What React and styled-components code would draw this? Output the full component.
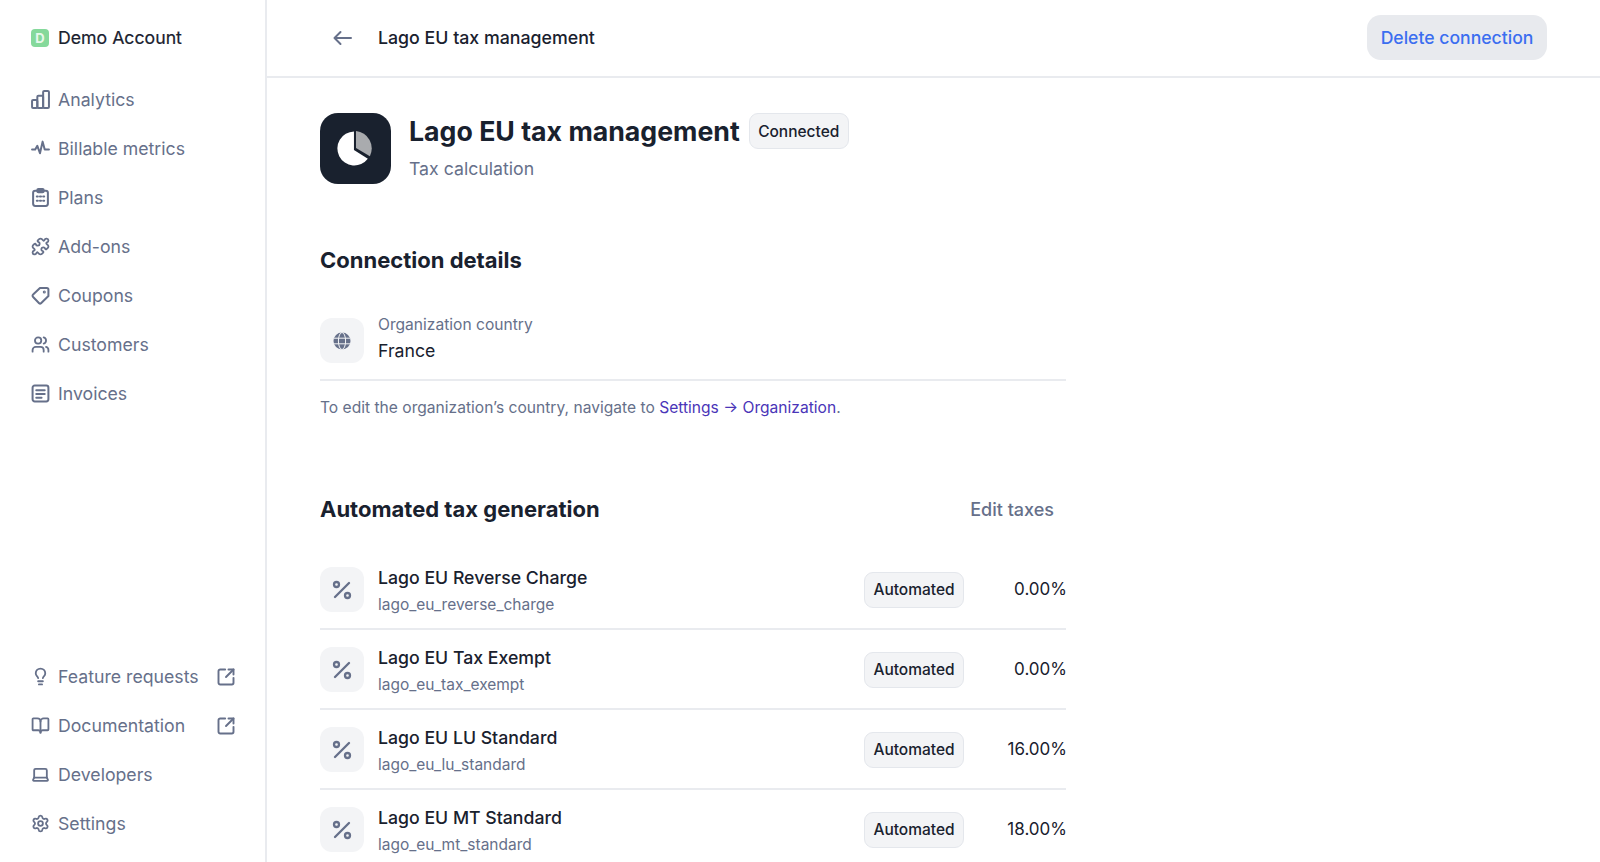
import React from "react";
import styled, { createGlobalStyle } from "styled-components";
import {
  Puzzle,
  Users,
  Lightbulb,
  BookOpen,
  Laptop,
  Settings,
  SquareArrowOutUpRight,
  Percent,
} from "lucide-react";

const Global = createGlobalStyle`
  html, body { margin: 0; padding: 0; background: #fff; }
  body { font-family: Inter, "Liberation Sans", sans-serif; color: #19212e; }
  * { box-sizing: border-box; }
`;

const Page = styled.div`
  display: flex;
  width: 1600px;
  height: 862px;
  overflow: hidden;
`;

const Sidebar = styled.aside`
  width: 267px;
  flex: none;
  display: flex;
  flex-direction: column;
  justify-content: space-between;
  border-right: 2px solid #e9ebef;
  padding: 0 0 14px 31px;
`;

const Account = styled.div`
  display: flex;
  align-items: center;
  gap: 9px;
  height: 75px;
  font-size: 17.7px;
  font-weight: 400;
  -webkit-text-stroke: 0.2px #19212e;
`;

const Avatar = styled.span`
  width: 18px;
  height: 18px;
  border-radius: 4px;
  background: #85d99b;
  color: #e8f8ec;
  font-size: 13px;
  font-weight: 700;
  display: flex;
  align-items: center;
  justify-content: center;
  -webkit-text-stroke: 0;
`;

const NavRow = styled.div`
  display: flex;
  align-items: center;
  gap: 8px;
  height: 49px;
  width: 205px;
  font-size: 17.7px;
  color: #66708a;
  svg { flex: none; }
`;

const ExtIcon = styled.span`
  margin-left: auto;
  display: flex;
`;

const Main = styled.main`
  flex: 1;
  display: flex;
  flex-direction: column;
`;

const Topbar = styled.header`
  height: 78px;
  flex: none;
  display: flex;
  align-items: center;
  border-bottom: 2px solid #e9ebef;
  padding: 0 53px 1px 66px;
  color: #66708a;
`;

const TopTitle = styled.div`
  margin-left: 26px;
  font-size: 17.75px;
  font-weight: 500;
  color: #19212e;
`;

const DangerButton = styled.button`
  margin-left: auto;
  width: 180px;
  height: 45px;
  border: 0;
  border-radius: 14px;
  background: #e8eaee;
  color: #3b6ef0;
  font-family: inherit;
  font-size: 17.6px;
  font-weight: 500;
`;

const Content = styled.div`
  width: 799px;
  padding: 35px 0 0 53px;
`;

const Hero = styled.div`
  display: flex;
  gap: 18px;
  margin-bottom: 60px;
`;

const HeroIcon = styled.div`
  width: 71px;
  height: 71px;
  border-radius: 18px;
  background: #19212e;
  display: flex;
  align-items: center;
  justify-content: center;
`;

const HeroTitleRow = styled.div`
  display: flex;
  align-items: center;
  gap: 9px;
  height: 36px;
  margin-bottom: 8px;
`;

const HeroTitle = styled.h1`
  margin: 0;
  font-size: 26.7px;
  font-weight: 700;
  line-height: 36px;
`;

const HeroSub = styled.div`
  font-size: 17.7px;
  line-height: 24px;
  color: #66708a;
`;

const Badge = styled.span`
  display: inline-flex;
  align-items: center;
  justify-content: center;
  height: 36px;
  width: 100px;
  border: 1px solid #e4e7ec;
  border-radius: 9px;
  background: #f3f4f6;
  font-size: 15.5px;
  font-weight: 500;
  color: #19212e;
  flex: none;
  margin-top: ${(p) => p.$top || 0}px;
`;

const SectionHead = styled.div`
  display: flex;
  align-items: center;
  justify-content: space-between;
  height: 32px;
`;

const SectionTitle = styled.h2`
  margin: 0;
  font-size: 22px;
  font-weight: 700;
  line-height: 32px;
`;

const EditLink = styled.span`
  font-size: 18px;
  font-weight: 500;
  color: #66708a;
  margin-right: 12px;
`;

const IconBox = styled.div`
  width: 44px;
  height: 45px;
  border-radius: 12px;
  background: #f3f4f6;
  color: #66708a;
  display: flex;
  align-items: center;
  justify-content: center;
  flex: none;
  margin-top: ${(p) => p.$top || 0}px;
`;

const OrgRow = styled.div`
  display: flex;
  align-items: flex-start;
  gap: 14px;
  height: 79px;
  margin-top: 26px;
  border-bottom: 2px solid #e9ebef;
  padding-top: 12px;
`;

const Label = styled.div`
  font-size: 15.6px;
  line-height: 22px;
  color: #66708a;
  margin-bottom: 3px;
`;

const Value = styled.div`
  font-size: 17.7px;
  line-height: 24px;
`;

const Helper = styled.p`
  margin: 15px 0 73px;
  font-size: 15.6px;
  line-height: 24px;
  color: #66708a;
  a { color: #4a35b8; text-decoration: none; }
`;

const TaxList = styled.div`
  margin-top: 25px;
`;

const TaxRow = styled.div`
  display: flex;
  align-items: center;
  height: 80px;
  padding-bottom: 1px;
  border-bottom: 2px solid #e9ebef;
`;

const TaxText = styled.div`
  flex: 1;
  margin: 4px 0 0 14px;
`;

const TaxName = styled.div`
  font-size: 17.7px;
  font-weight: 500;
  line-height: 24px;
  margin-bottom: 4px;
`;

const TaxCode = styled.div`
  font-size: 15.5px;
  line-height: 22px;
  color: #66708a;
`;

const Rate = styled.div`
  width: 103px;
  margin-right: -1px;
  text-align: right;
  font-size: 17px;
`;

const Glyph = styled.svg.attrs({
  width: 19,
  height: 19,
  viewBox: "0 0 18 18",
  fill: "none",
  stroke: "currentColor",
  strokeWidth: 1.9,
  strokeLinecap: "round",
  strokeLinejoin: "round",
})``;

function BarsIcon() {
  return (
    <Glyph>
      <rect x="1" y="9.5" width="5" height="7.5" rx="1" />
      <rect x="6" y="5.5" width="5.5" height="11.5" rx="1" />
      <rect x="11.5" y="1" width="5.5" height="16" rx="1" />
    </Glyph>
  );
}

function PulseIcon() {
  return (
    <Glyph>
      <path d="M1 10h3l2-3.5 2.5 7 2.5-11 2 7.5h4" />
    </Glyph>
  );
}

function PlansIcon() {
  return (
    <Glyph>
      <rect x="2" y="2.5" width="14" height="14.5" rx="2" />
      <rect x="6" y="1" width="6" height="3" rx="1" fill="currentColor" />
      <path d="M5.5 8h1M8.5 8h1M11.5 8h1M5.5 12h1M8.5 12h1M11.5 12h1" />
    </Glyph>
  );
}

function TagIcon() {
  return (
    <Glyph>
      <path d="M2 8 8.5 1.8H15A1.5 1.5 0 0 1 16.5 3.3V9.5L9.5 16.3A1.3 1.3 0 0 1 7.7 16.3L2 10.4A1.6 1.6 0 0 1 2 8Z" />
      <circle cx="12.6" cy="5.6" r="0.5" fill="currentColor" />
    </Glyph>
  );
}

function InvoiceIcon() {
  return (
    <Glyph>
      <rect x="1.5" y="1.5" width="15" height="15" rx="2" />
      <path d="M5 6h8M5 9.5h8M5 13h5" />
    </Glyph>
  );
}

function BackIcon() {
  return (
    <svg width="19" height="16" viewBox="0 0 19 16" fill="none" stroke="currentColor" strokeWidth="2" strokeLinecap="round" strokeLinejoin="round">
      <path d="M18 8H1.5M7.5 2 1.5 8l6 6" />
    </svg>
  );
}

function GlobeIcon() {
  return (
    <svg width="18" height="18" viewBox="0 0 18 18" fill="currentColor">
      <circle cx="9" cy="9" r="8.5" />
      <g fill="none" stroke="#f3f4f6" strokeWidth="1">
        <ellipse cx="9" cy="9" rx="3.6" ry="8.5" />
        <path d="M1 6.2h16M1 11.8h16" />
      </g>
    </svg>
  );
}

function PieIcon() {
  return (
    <svg width="37" height="37" viewBox="0 0 36 36">
      <path d="M16.5 1.5V19.5L30 28A16.5 16.5 0 1 1 16.5 1.5Z" fill="#fff" />
      <path d="M18.5 1A17 17 0 0 1 32 25.5L18.5 17.5Z" fill="#a9abae" />
    </svg>
  );
}

const lucideProps = { size: 19, strokeWidth: 2.3 };

const topNav = [
  ["Analytics", <BarsIcon />],
  ["Billable metrics", <PulseIcon />],
  ["Plans", <PlansIcon />],
  ["Add-ons", <Puzzle {...lucideProps} />],
  ["Coupons", <TagIcon />],
  ["Customers", <Users {...lucideProps} />],
  ["Invoices", <InvoiceIcon />],
];

const bottomNav = [
  ["Feature requests", <Lightbulb {...lucideProps} />, true],
  ["Documentation", <BookOpen {...lucideProps} />, true],
  ["Developers", <Laptop {...lucideProps} />],
  ["Settings", <Settings {...lucideProps} />],
];

const taxes = [
  ["Lago EU Reverse Charge", "lago_eu_reverse_charge", "0.00%"],
  ["Lago EU Tax Exempt", "lago_eu_tax_exempt", "0.00%"],
  ["Lago EU LU Standard", "lago_eu_lu_standard", "16.00%"],
  ["Lago EU MT Standard", "lago_eu_mt_standard", "18.00%"],
];

export default function App() {
  return (
    <Page>
      <Global />
      <Sidebar>
        <div>
          <Account>
            <Avatar>D</Avatar>
            Demo Account
          </Account>
          {topNav.map(([label, icon]) => (
            <NavRow key={label}>
              {icon}
              {label}
            </NavRow>
          ))}
        </div>
        <div>
          {bottomNav.map(([label, icon, external]) => (
            <NavRow key={label}>
              {icon}
              {label}
              {external && (
                <ExtIcon>
                  <SquareArrowOutUpRight size={20} strokeWidth={2.3} />
                </ExtIcon>
              )}
            </NavRow>
          ))}
        </div>
      </Sidebar>
      <Main>
        <Topbar>
          <BackIcon />
          <TopTitle>Lago EU tax management</TopTitle>
          <DangerButton>Delete connection</DangerButton>
        </Topbar>
        <Content>
          <Hero>
            <HeroIcon>
              <PieIcon />
            </HeroIcon>
            <div>
              <HeroTitleRow>
                <HeroTitle>Lago EU tax management</HeroTitle>
                <Badge>Connected</Badge>
              </HeroTitleRow>
              <HeroSub>Tax calculation</HeroSub>
            </div>
          </Hero>
          <SectionHead>
            <SectionTitle>Connection details</SectionTitle>
          </SectionHead>
          <OrgRow>
            <IconBox $top={4}>
              <GlobeIcon />
            </IconBox>
            <div>
              <Label>Organization country</Label>
              <Value>France</Value>
            </div>
          </OrgRow>
          <Helper>
            To edit the organization’s country, navigate to <a href="#settings">Settings → Organization</a>.
          </Helper>
          <SectionHead>
            <SectionTitle>Automated tax generation</SectionTitle>
            <EditLink>Edit taxes</EditLink>
          </SectionHead>
          <TaxList>
            {taxes.map(([name, code, rate]) => (
              <TaxRow key={code}>
                <IconBox $top={2}>
                  <Percent size={24} strokeWidth={2.3} />
                </IconBox>
                <TaxText>
                  <TaxName>{name}</TaxName>
                  <TaxCode>{code}</TaxCode>
                </TaxText>
                <Badge $top={2}>Automated</Badge>
                <Rate>{rate}</Rate>
              </TaxRow>
            ))}
          </TaxList>
        </Content>
      </Main>
    </Page>
  );
}
